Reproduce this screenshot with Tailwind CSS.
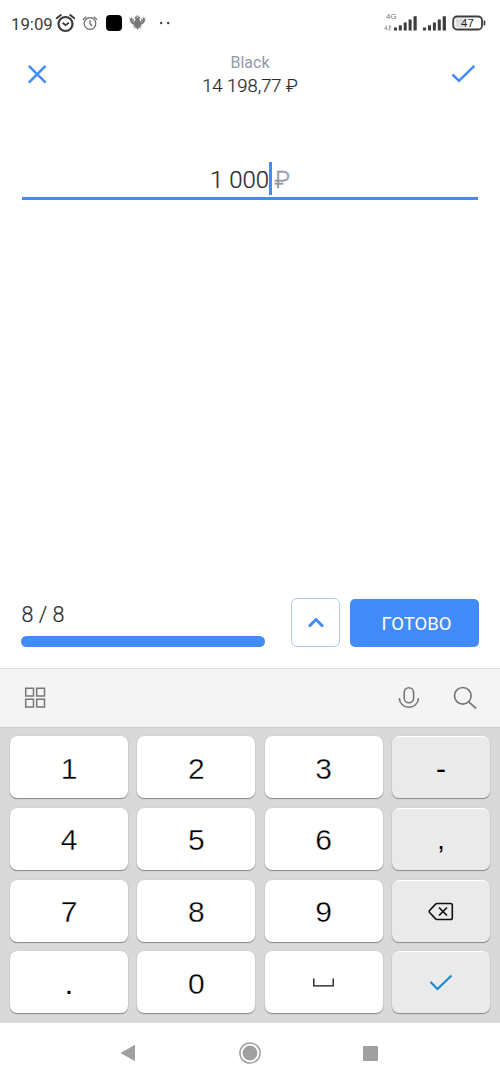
<!DOCTYPE html>
<html lang="ru">
<head>
<meta charset="utf-8">
<title>Black</title>
<script src="https://cdn.jsdelivr.net/npm/@tailwindcss/browser@4"></script>
</head>
<body class="bg-white">
<div class="flex h-[1083px] w-[500px] flex-col overflow-hidden bg-white font-['Roboto','Noto_Sans',sans-serif] text-[#28292c]">

  <!-- Status bar -->
  <div class="flex h-[44px] items-center justify-between pt-[4px] pl-[11px] pr-[13px]">
    <div class="flex items-center">
      <span class="w-[44px] text-[16.800px] leading-none whitespace-nowrap text-[#3c3c3c]">19:09</span>
      <svg class="-mt-[2px] h-[20px] w-[20px]" viewBox="0 0 20 20" fill="none" stroke="#3c3c3c"><circle cx="10.500" cy="11" r="7" stroke-width="2.200"/><path d="M1.700 5.200 5.800 2M19.300 5.200l-4.100-3.200" stroke-width="2" stroke-linecap="round"/><path d="m7.600 9.700 2.900 2.500 3.400-2.500" stroke-width="1.800"/></svg>
      <svg class="-mt-[2px] ml-[7px] h-[16px] w-[16px]" viewBox="0 0 16 16" fill="none" stroke="#666"><circle cx="8" cy="8.500" r="5.800" stroke-width="1.200"/><path d="M1 4.800 4.300 1.600M15 4.800l-3.300-3.200" stroke-width="1.300"/><path d="M8 5v3.700l2 2.300" stroke-width="1.200"/></svg>
      <span class="-mt-[2px] ml-[8px] h-[16px] w-[16px] rounded-[4px] bg-black"></span>
      <svg class="-mt-[2px] ml-[7px] h-[16px] w-[17px]" viewBox="0 0 17 16" fill="#767676"><path d="M.6 1.500c-.3 3.500.7 6.500 3.200 8l1.500.3-1.800 1.700 2.700-.5-1.700 2.500 2.500-1L8.500 15l1.500-2.500 2.500 1-1.700-2.500 2.700.5-1.800-1.700 1.500-.3c2.500-1.500 3.500-4.500 3.200-8l-1.300 3-.3-3-1.300 3.400-.4-2.800-1.100 3.800-1.200.4-.3-2.700 1-.4-1-1.600-1.400.3-.3 1.200H8.100l-.3-1.200-1.400-.3-1 1.600 1 .4-.3 2.700-1.200-.4-1.100-3.800-.4 2.800L2.200 1.500l-.3 3z"/><path d="M7.500.5h2v1.600h-2z"/><path d="M2.500 5.500 5.500 8M14.500 5.500 11.500 8" stroke="#fff" stroke-width=".4"/></svg>
      <svg class="-mt-[2px] ml-[13px] h-[4px] w-[12px]" viewBox="0 0 12 4" fill="#3c3c3c"><circle cx="2.200" cy="2" r="1.200"/><circle cx="9.200" cy="2" r="1.200"/></svg>
    </div>
    <div class="flex items-center">
      <div class="flex w-[9px] flex-col font-['Liberation_Sans',sans-serif] leading-none text-[#777]">
        <span class="-mt-[5px] ml-[1px] text-[8px] leading-[8px]">4G</span>
        <svg class="-ml-[1px] mt-[4px] h-[6px] w-[8px]" viewBox="0 0 8 6" fill="none" stroke="#999" stroke-width=".8"><path d="M2.500 5.500V.8L.4 3.500h3.200M5.500.5V5M4.200 3.800 5.500 5.300l1.300-1.500M4.400 1h2.400v1.600H5.500"/></svg>
      </div>
      <svg class="-mt-[2px] h-[15px] w-[53px]" viewBox="0 0 53 15" fill="#3c3c3c"><path d="M0 11.500h3v3H0zM4.800 9.300h3v5.200h-3zM9.700 6.500h3v8h-3zM14.600 3.500h3v11h-3zM19.500.3h3.200v14.200h-3.200zM29 11.500h3v3h-3zM34 9.300h3v5.200h-3zM38.900 6.500h3v8h-3zM43.800 3.500h3v11h-3zM48.700.3h3.200v14.200h-3.200z"/></svg>
      <svg class="-mt-[2px] ml-[5px] h-[16px] w-[35px]" viewBox="0 0 35 16"><rect x="1.200" y="1.500" width="28.800" height="13" rx="3.800" fill="#fff" stroke="#3c3c3c" stroke-width="1.800"/><path d="M5 3.500h8v9H5a1.500 1.500 0 0 1-1.500-1.500V5A1.500 1.500 0 0 1 5 3.500z" fill="#ddd"/><path d="M31.600 5.500h.7q1 0 1 1v3q0 1-1 1h-.7z" fill="#3c3c3c"/><text x="15.500" y="12" text-anchor="middle" font-family="Liberation Sans, sans-serif" font-size="11.500" fill="#222">47</text></svg>
    </div>
  </div>

  <!-- Header -->
  <header class="flex h-[61px] items-center justify-between pl-[27px] pr-[24px]">
    <svg class="-mt-[2px] h-[20px] w-[20px]" viewBox="0 0 20 20" fill="none" stroke="#428bf9" stroke-width="2.500"><path d="m1.800 1.800 16.800 16.800M18.600 1.800 1.800 18.600"/></svg>
    <div class="flex flex-col items-center pl-[2px]">
      <span class="text-[16px] leading-[24px] text-[#9299a6]">Black</span>
      <span class="-mt-[1px] text-[18.400px] leading-[24px] font-light whitespace-nowrap [-webkit-text-stroke:0.2px_#28292c]">14 198,77 ₽</span>
    </div>
    <svg class="-mt-[1px] h-[20px] w-[25px]" viewBox="0 0 25 20" fill="none" stroke="#428bf9" stroke-width="2.500"><path d="m1.500 10.500 6.500 6.300L23.300 1.900"/></svg>
  </header>

  <!-- Amount field -->
  <div class="mx-[22px] mt-[56px] flex h-[39px] items-start justify-center border-b-[3px] border-[#428bf9] text-[24px] font-light">
    <span class="leading-[38px] [-webkit-text-stroke:0.2px_#28292c]">1 000</span>
    <span class="mt-[1px] h-[33px] w-[2.500px] bg-[#428bf9]"></span>
    <span class="ml-[3px] leading-[38px] text-[#9299a6] [-webkit-text-stroke:0.4px_#9299a6]">₽</span>
  </div>

  <!-- Progress and actions -->
  <div class="mt-auto flex h-[70px] items-start pl-[21px] pr-[21px]">
    <div class="w-[244px]">
      <div class="h-[38px] pl-[0.500px] text-[21.500px] leading-[33px] font-light [-webkit-text-stroke:0.2px_#28292c]">8 / 8</div>
      <div class="h-[10.500px] rounded-full bg-[#428bf9]"></div>
    </div>
    <button class="ml-[26px] flex h-[49px] w-[49px] items-center justify-center rounded-[6px] border border-[#a9cbed]"><svg class="-mt-[2px] h-[12px] w-[18px]" viewBox="0 0 18 12" fill="none" stroke="#428bf9" stroke-width="3"><path d="m2 10.500 7-7 7 7"/></svg></button>
    <button class="mt-[0.500px] ml-[10px] h-[48px] w-[129px] rounded-[5px] bg-[#428bf9] pt-[4px] pl-[4px] text-[18.500px] text-white">ГОТОВО</button>
  </div>

  <!-- Keyboard toolbar -->
  <div class="flex h-[59px] shrink-0 items-center border-t border-[#dedede] bg-[#f4f4f4] pl-[24px] pr-[22px]">
    <svg class="h-[22px] w-[22px]" viewBox="0 0 22 22" fill="none" stroke="#777" stroke-width="1.500"><path d="M1.700 1.200h7.800V9H1.700zM12.700 1.200h7.800V9h-7.800zM1.700 12.200h7.800V20H1.700zM12.700 12.200h7.800V20h-7.800z"/></svg>
    <svg class="ml-auto h-[22px] w-[22px]" viewBox="0 0 22 22" fill="none" stroke="#777" stroke-width="1.600"><rect x="6.200" y=".8" width="9.400" height="15" rx="4.700"/><path d="M1.300 11c.3 5.800 4.400 9.200 9.600 9.200s9.300-3.400 9.600-9.200"/></svg>
    <svg class="ml-[33px] h-[24px] w-[25px]" viewBox="0 0 25 24" fill="none" stroke="#777" stroke-width="1.700"><circle cx="9.800" cy="9.800" r="8.300"/><path d="m15.800 15.800 7.300 6.700"/></svg>
  </div>

  <!-- Keypad -->
  <div class="grid h-[296px] shrink-0 grid-cols-[118px_118px_118px_98px] grid-rows-[62px_62px_62px_62px] content-start gap-x-[9.300px] gap-y-[9.700px] border-t border-[#cecece] bg-[#d9d9d9] pt-[8.300px] pl-[10px] font-['Liberation_Sans',sans-serif] text-[30px] text-black *:flex *:items-center *:justify-center *:rounded-[7px] *:pt-[2px] *:shadow-[0_1px_1px_#858585,0_0_1px_#aaa]">
    <button class="bg-white [-webkit-text-stroke:0.350px_#fff]">1</button>
    <button class="bg-white [-webkit-text-stroke:0.350px_#fff]">2</button>
    <button class="bg-white [-webkit-text-stroke:0.350px_#fff]">3</button>
    <button class="border-t border-white bg-[#eaeaea]">-</button>
    <button class="bg-white [-webkit-text-stroke:0.350px_#fff]">4</button>
    <button class="bg-white [-webkit-text-stroke:0.350px_#fff]">5</button>
    <button class="bg-white [-webkit-text-stroke:0.350px_#fff]">6</button>
    <button class="border-t border-white bg-[#eaeaea] text-[27px]">,</button>
    <button class="bg-white [-webkit-text-stroke:0.350px_#fff]">7</button>
    <button class="bg-white [-webkit-text-stroke:0.350px_#fff]">8</button>
    <button class="bg-white [-webkit-text-stroke:0.350px_#fff]">9</button>
    <button class="border-t border-white bg-[#eaeaea]"><svg class="-mt-[1px] ml-[1px] h-[20px] w-[26px]" viewBox="0 0 26 20" fill="none" stroke="#111" stroke-width="1.600" stroke-linejoin="round"><path d="M9 1.500h13.500q1.800 0 1.800 1.800v12.400q0 1.800-1.800 1.800H9q-.8 0-1.400-.6L1.600 10.500q-.8-1 0-2L7.600 2.100Q8.200 1.500 9 1.500z"/><path d="m11 5.500 8 8M19 5.500l-8 8" stroke-width="1.700"/></svg></button>
    <button class="bg-white">.</button>
    <button class="bg-white [-webkit-text-stroke:0.350px_#fff]">0</button>
    <button class="bg-white"><svg class="-mt-[1px] h-[9px] w-[21px]" viewBox="0 0 21 9" fill="none" stroke="#111" stroke-width="1.300"><path d="M.8.500v7.300h19.400V.500"/></svg></button>
    <button class="border-t border-white bg-[#eaeaea]"><svg class="-mt-[3px] h-[17px] w-[24px]" viewBox="0 0 24 17" fill="none" stroke="#1588cf" stroke-width="2"><path d="m1.500 8 7 7L22.500 1.500"/></svg></button>
  </div>

  <!-- Navigation bar -->
  <nav class="flex h-[60px] shrink-0 items-center bg-white pl-[120px]">
    <svg class="h-[18px] w-[15px]" viewBox="0 0 15 18" fill="#a0a0a0"><path d="M.5 9 15 .8v16.400z"/></svg>
    <svg class="ml-[104px] h-[22px] w-[22px]" viewBox="0 0 22 22"><circle cx="11" cy="11" r="10.100" fill="none" stroke="#a0a0a0" stroke-width="1.500"/><circle cx="11" cy="11" r="7.400" fill="#a0a0a0"/></svg>
    <span class="ml-[102px] h-[15px] w-[15px] rounded-[1px] bg-[#a0a0a0]"></span>
  </nav>
</div>
</body>
</html>
